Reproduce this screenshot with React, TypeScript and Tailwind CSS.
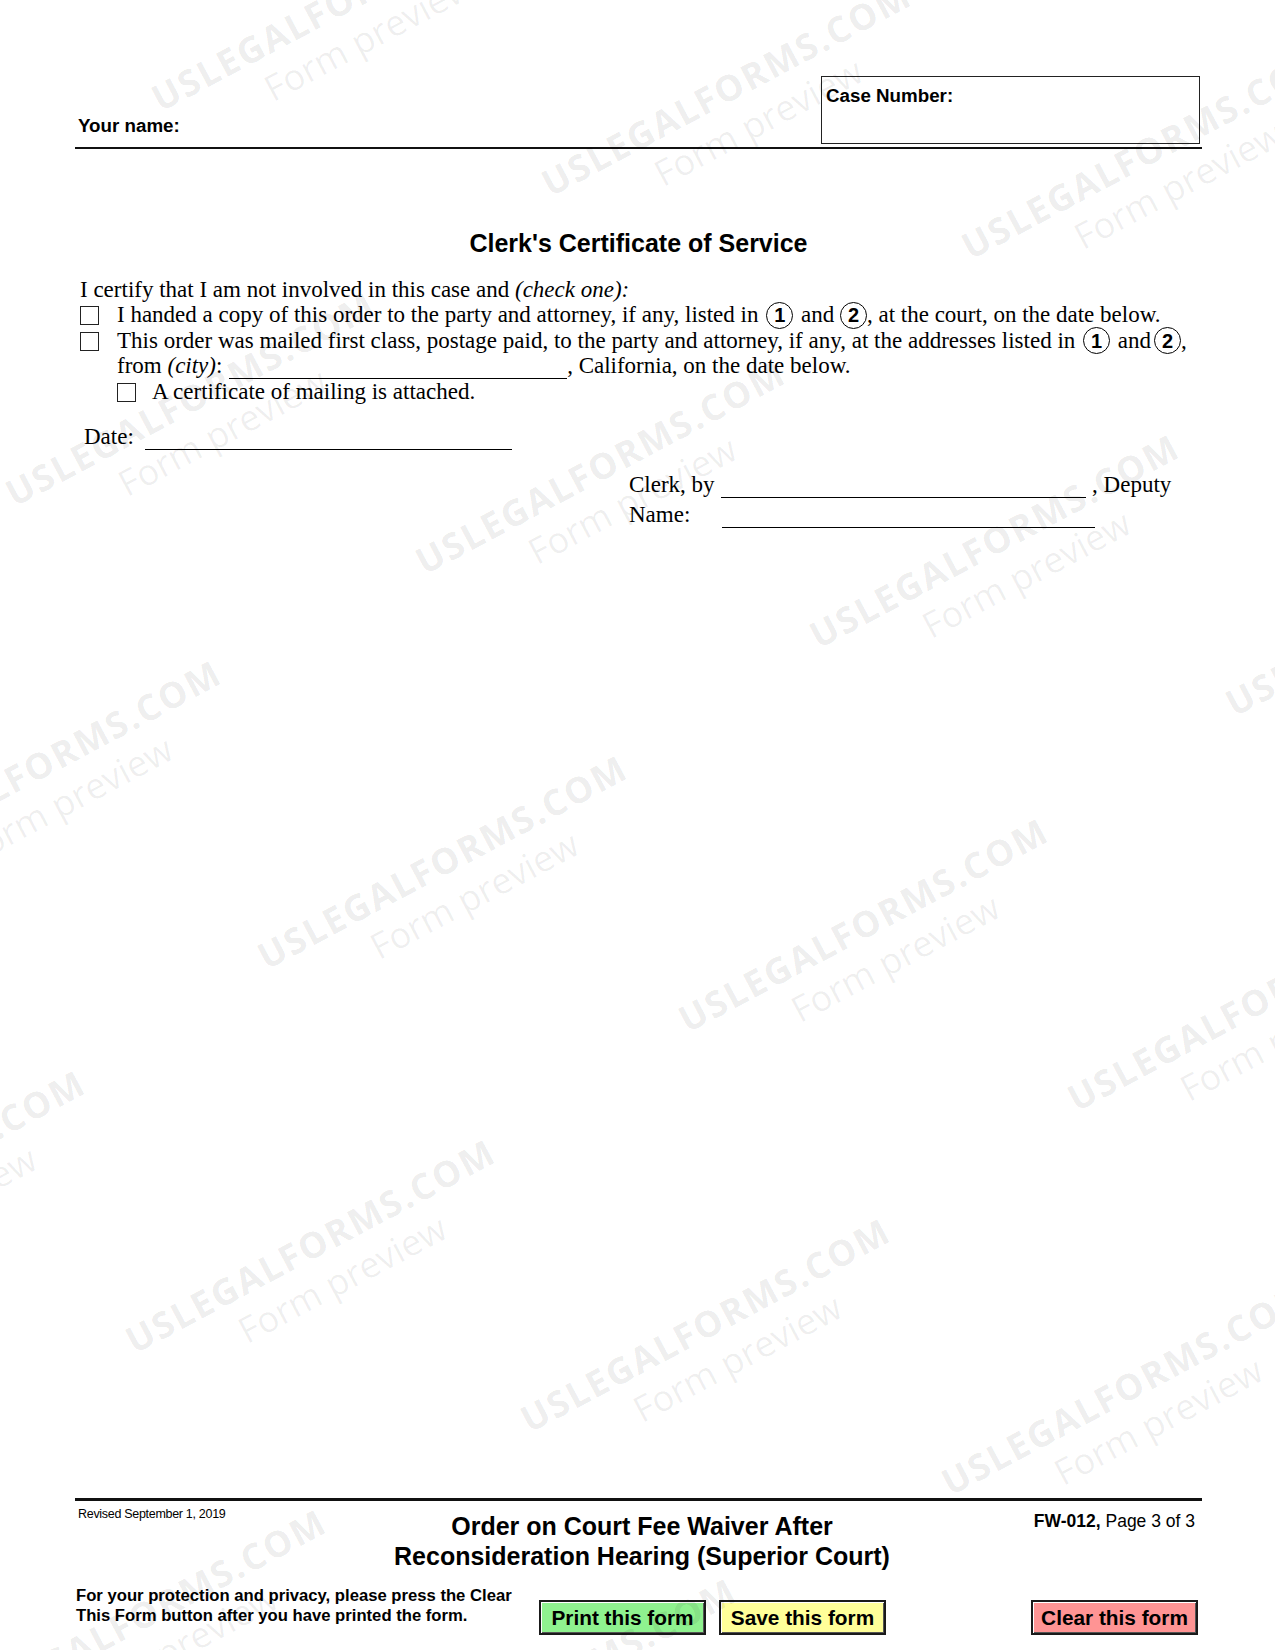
import React from "react";

const serif = "font-['Liberation_Serif',serif]";
const sans = "font-['Liberation_Sans',Arial,sans-serif]";

function Circ({ n, className = "" }: { n: string; className?: string }) {
  return (
    <span className={`${sans} inline-flex items-center justify-center w-[27px] h-[27px] -my-[3px] rounded-full border-[1.5px] border-black font-bold text-[20px] leading-none ${className}`}>
      {n}
    </span>
  );
}

function Box({ className = "" }: { className?: string }) {
  return <div className={`w-[19px] h-[19px] border-[1.5px] border-[#222] shrink-0 ${className}`} />;
}

function Line({ w, className = "" }: { w: string; className?: string }) {
  return <span className={`inline-block ${w} h-[1px] border-b-[1.3px] border-black align-[-6px] ${className}`} />;
}

const marks: { x: number; y: number }[] = [
  { x: 160, y: 112 },
  { x: 550, y: 197 },
  { x: 970, y: 260 },
  { x: 14, y: 507 },
  { x: 424, y: 575 },
  { x: 818, y: 649 },
  { x: 1234, y: 717 },
  { x: -140, y: 875 },
  { x: 266, y: 970 },
  { x: 687, y: 1033 },
  { x: 1076, y: 1112 },
  { x: -276, y: 1285 },
  { x: 134, y: 1354 },
  { x: 529, y: 1433 },
  { x: 950, y: 1496 },
  { x: -35, y: 1724 },
  { x: 375, y: 1793 },
];

function Watermark({ x, y }: { x: number; y: number }) {
  return (
    <div
      className="absolute origin-top-left rotate-[-28deg] font-['Open_Sans',sans-serif] whitespace-nowrap"
      style={{ left: x - 14, top: y - 27 }}
    >
      <div className="text-[36px] leading-[36px] font-bold tracking-[2px] text-black/[0.085]">USLEGALFORMS.COM</div>
      <div className="text-[36px] leading-[36px] font-normal ml-[104px] mt-[8px] text-black/[0.065]">Form preview</div>
    </div>
  );
}

function Btn({ label, bg }: { label: string; bg: string }) {
  return (
    <div
      className={`${sans} ${bg} w-[167px] h-[35px] border-2 border-[#1a1a1a] shadow-[inset_1px_1px_0_#ffffff,inset_-1px_-1px_0_#555555] flex items-center justify-center font-bold text-[20.8px] text-black`}
    >
      {label}
    </div>
  );
}

export default function App() {
  return (
    <div className="w-[1275px] h-[1650px] bg-white relative overflow-hidden text-black">
      <div className="h-full flex flex-col pl-[75px] pr-[73px]">
        {/* Header */}
        <div className="mt-[76px] flex justify-between items-end">
          <div className={`${sans} font-bold text-[18.75px] leading-[20px] pl-[3px] pb-[8px]`}>Your name:</div>
          <div className="w-[379px] h-[68px] border-[1.5px] border-[#222] mr-[2px] pl-[4px] pt-[9px]">
            <div className={`${sans} font-bold text-[18.75px] leading-[20px]`}>Case Number:</div>
          </div>
        </div>
        <div className="mt-[3px] h-[2px] bg-[#111]" />

        {/* Title */}
        <div className={`${sans} mt-[80px] text-center font-bold text-[25px] leading-[28px]`}>
          Clerk's Certificate of Service
        </div>

        {/* Body */}
        <div className={`${serif} text-[23px] leading-[25.3px] mt-[20px] whitespace-nowrap`}>
          <div className="pl-[5px]">
            I certify that I am not involved in this case and <i>(check one):</i>
          </div>
          <div className="flex items-start pl-[5px]">
            <Box className="mt-[4px]" />
            <div className="ml-[18px]">
              I handed a copy of this order to the party and attorney, if any, listed in <Circ n="1" className="ml-[2px] mr-[2px]" /> and <Circ n="2" />, at the court, on the date below.
            </div>
          </div>
          <div className="flex items-start pl-[5px]">
            <Box className="mt-[4px]" />
            <div className="ml-[18px]">
              This order was mailed first class, postage paid, to the party and attorney, if any, at the addresses listed in <Circ n="1" className="ml-[2px] mr-[2px]" /> and<span className="ml-[3px]" /><Circ n="2" />,
            </div>
          </div>
          <div className="pl-[42px]">
            from <i>(city)</i>: <Line w="w-[338px]" className="ml-[1px]" />, California, on the date below.
          </div>
          <div className="flex items-start pl-[42px]">
            <Box className="mt-[4px]" />
            <div className="ml-[16px]">A certificate of mailing is attached.</div>
          </div>

          <div className="pl-[9px] mt-[20px]">
            Date: <Line w="w-[367px]" className="ml-[5px]" />
          </div>

          <div className="pl-[554px] mt-[22px]">
            Clerk, by <Line w="w-[365px]" className="ml-[1px]" /> , Deputy
          </div>
          <div className="pl-[554px] mt-[4px]">
            Name:<Line w="w-[373px]" className="ml-[32px]" />
          </div>
        </div>

        {/* Footer */}
        <div className="mt-auto pb-[15px]">
          <div className="h-[3px] bg-[#111]" />
          <div className="flex items-start">
            <div className={`${sans} w-[300px] mt-[6px] pl-[3px] text-[12.5px] leading-[15px] tracking-[-0.3px]`}>
              Revised September 1, 2019
            </div>
            <div className={`${sans} flex-1 mt-[10px] pl-[7px] text-center font-bold text-[25px] leading-[30px]`}>
              <div>Order on Court Fee Waiver After</div>
              <div>Reconsideration Hearing (Superior Court)</div>
            </div>
            <div className={`${sans} w-[300px] mt-[10px] pr-[7px] text-right text-[17.5px] leading-[20px]`}>
              <span className="font-bold">FW-012,</span> Page 3 of 3
            </div>
          </div>
          <div className="flex items-start mt-[15px]">
            <div className={`${sans} w-[464px] pl-[1px] font-bold text-[16.67px] leading-[20px]`}>
              <div>For your protection and privacy, please press the Clear</div>
              <div>This Form button after you have printed the form.</div>
            </div>
            <div className="mt-[14px] flex">
              <Btn label="Print this form" bg="bg-[#8ff28f]" />
              <div className="ml-[13px]">
                <Btn label="Save this form" bg="bg-[#ffff99]" />
              </div>
            </div>
            <div className="mt-[14px] ml-auto mr-[4px]">
              <Btn label="Clear this form" bg="bg-[#ff9494]" />
            </div>
          </div>
        </div>
      </div>

      {/* Watermarks */}
      <div className="absolute inset-0 pointer-events-none">
        {marks.map((m, i) => (
          <Watermark key={i} x={m.x} y={m.y} />
        ))}
      </div>
    </div>
  );
}
